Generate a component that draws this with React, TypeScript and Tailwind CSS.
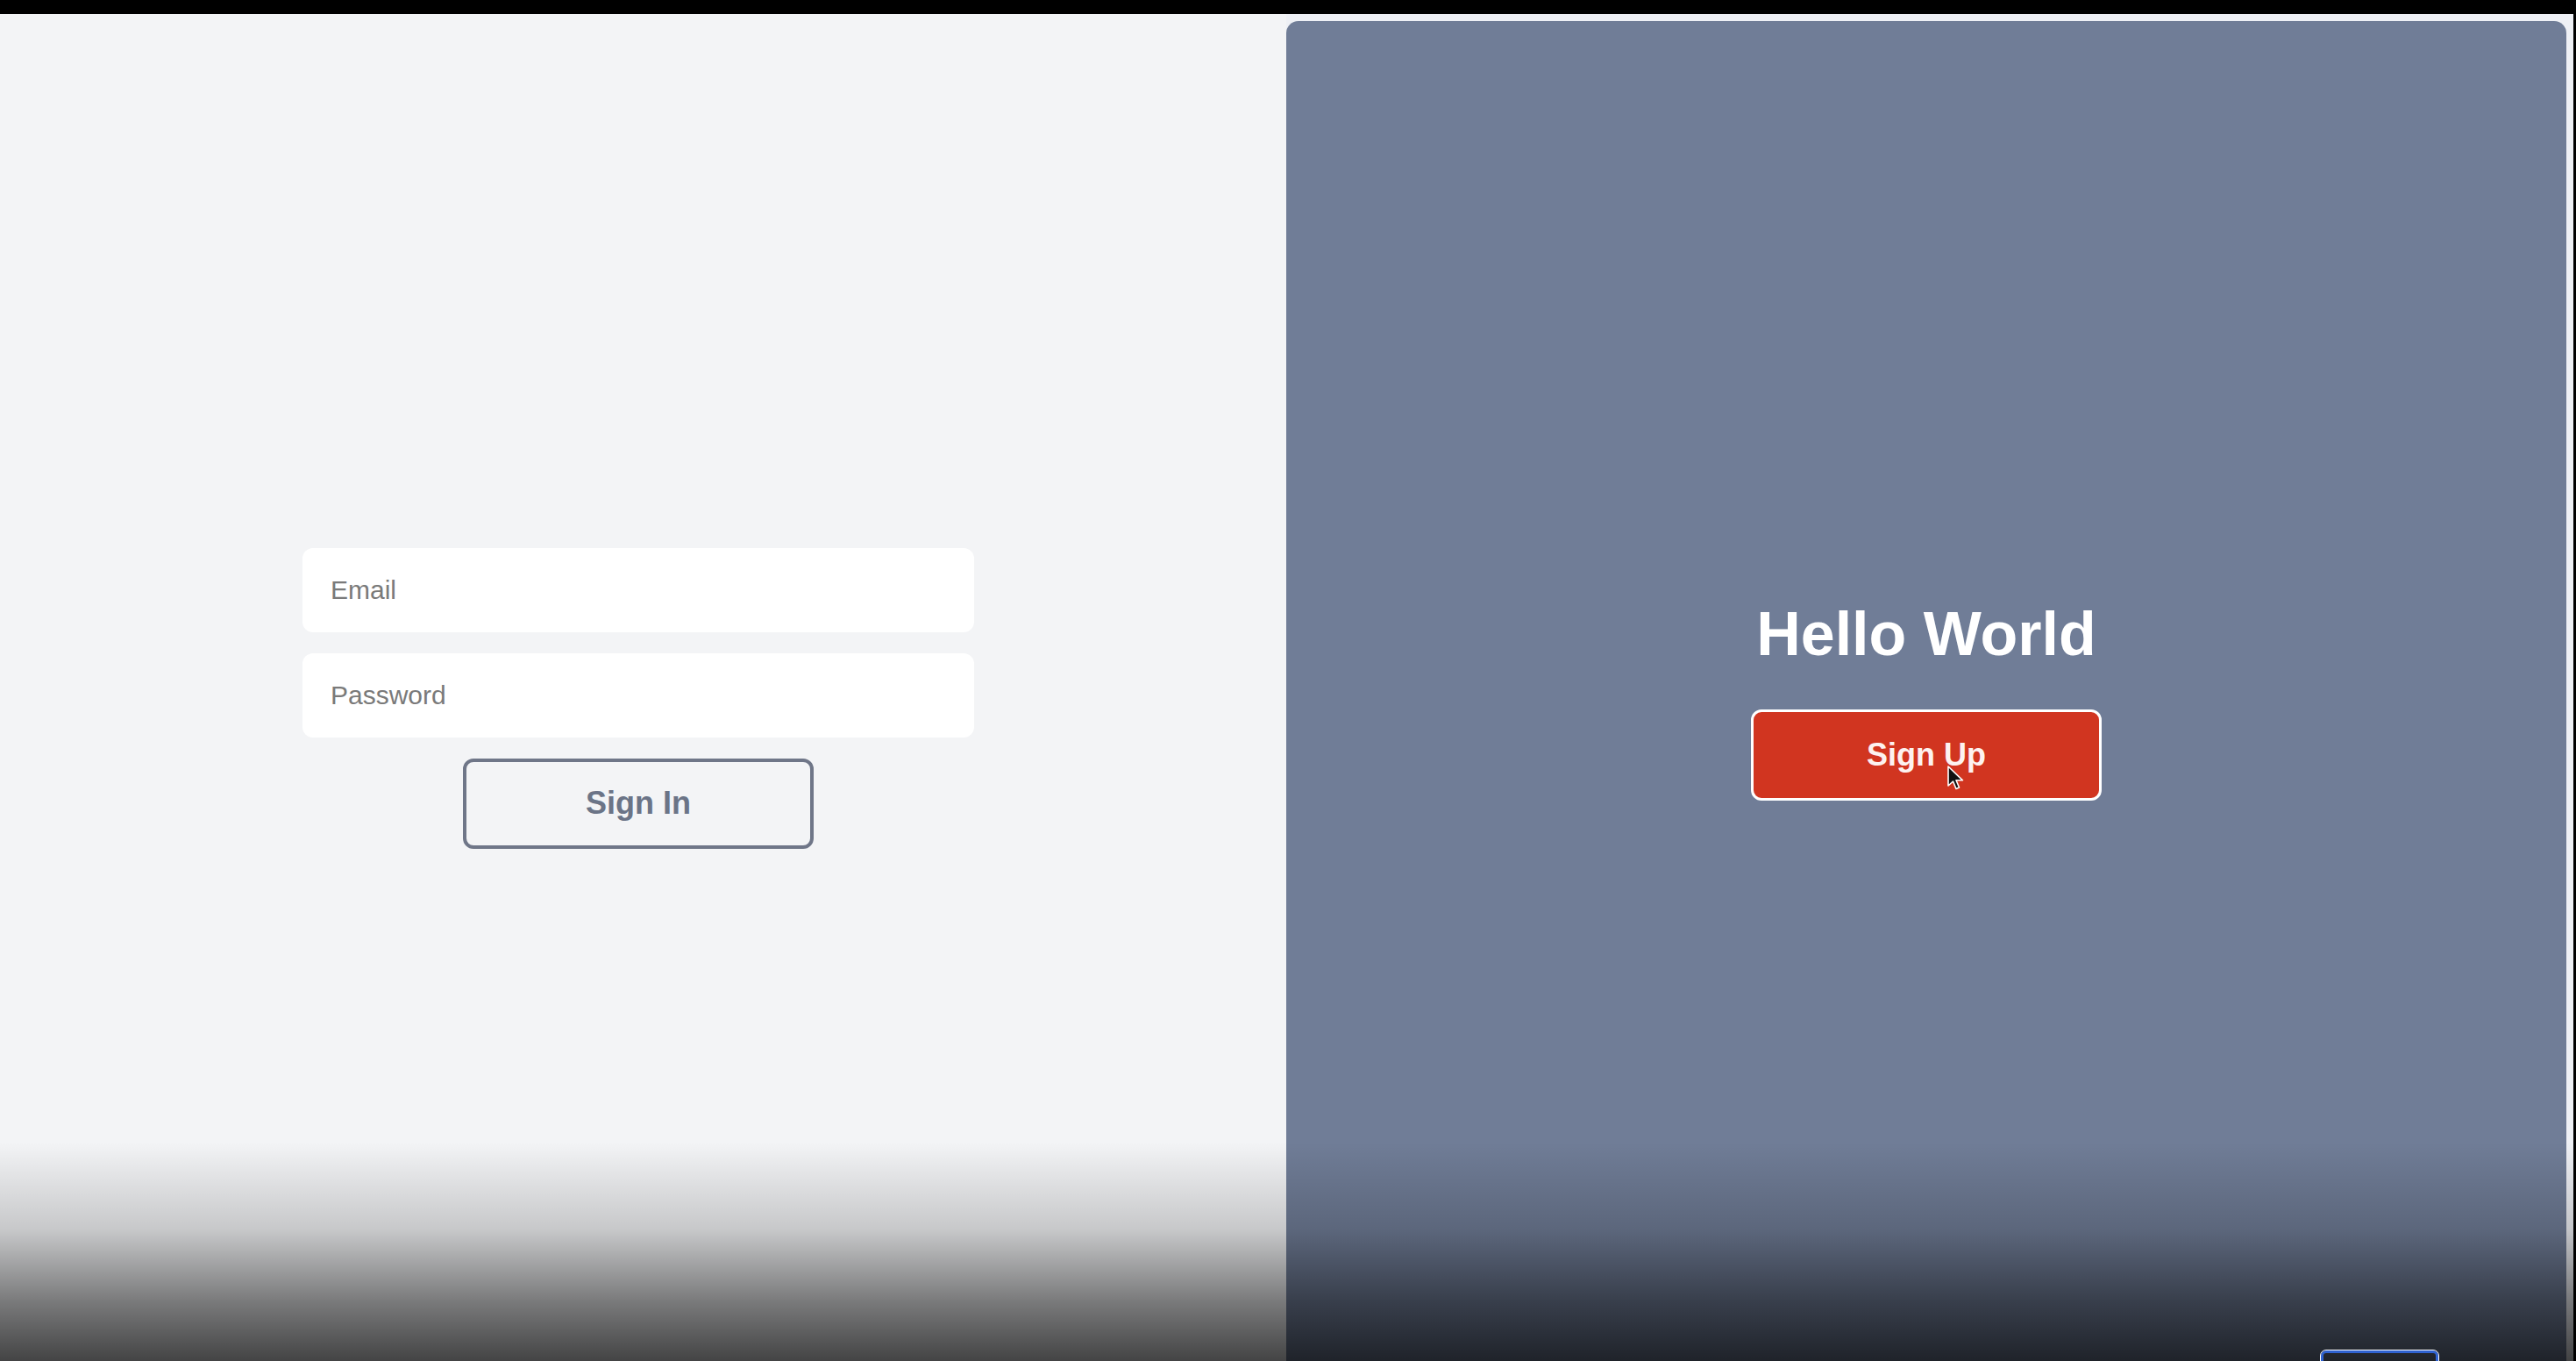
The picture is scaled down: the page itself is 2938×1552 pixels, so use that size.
import * as React from 'react';

const Cursor = () => (
    <svg width="22" height="30" viewBox="0 0 22 30" className="absolute left-[2220px] top-[872px]">
        <path d="M2 2 L2 24 L7.5 19 L11 27.5 L14.5 26 L11 17.8 L18.5 17.8 Z" fill="#111" stroke="#fff" strokeWidth="1.6" strokeLinejoin="round" />
    </svg>
);

const App = () => {
    return (
        <div className="relative w-[2938px] h-[1552px] overflow-hidden bg-black flex flex-col font-['Liberation_Sans',Arial,sans-serif]">
            {/* top bar */}
            <div className="h-4 shrink-0 bg-black" />

            <div className="flex flex-1 min-h-0 pr-[3px]">
                {/* left: sign in form */}
                <div className="w-[1467px] shrink-0 bg-[#f3f4f6] flex flex-col items-center justify-center pt-6 pr-[11px]">
                    <div className="w-[766px] flex flex-col items-center gap-6">
                        <input
                            type="email"
                            placeholder="Email"
                            className="w-full h-[96px] rounded-[12px] bg-white px-8 text-[30px] text-gray-700 placeholder:text-[#7a7a7a] outline-none"
                        />
                        <input
                            type="password"
                            placeholder="Password"
                            className="w-full h-[96px] rounded-[12px] bg-white px-8 text-[30px] text-gray-700 placeholder:text-[#7a7a7a] outline-none"
                        />
                        <button className="w-[400px] h-[103px] rounded-[12px] border-[4px] border-[#6f7688] text-[36px] font-bold text-[#6b7487]">
                            Sign In
                        </button>
                    </div>
                </div>

                {/* right: sign up panel */}
                <div className="flex-1 flex bg-[#eef0f5] pt-2 pr-2">
                    <div className="flex-1 rounded-t-[14px] bg-[#707d97] flex flex-col items-center justify-center pt-6 gap-[51px]">
                        <h1 className="text-[70px] leading-none font-bold text-white">Hello World</h1>
                        <button className="w-[400px] h-[104px] rounded-[12px] border-[3px] border-white bg-[#d13520] text-[36px] font-bold text-[#fdf2f0]">
                            Sign Up
                        </button>
                    </div>
                </div>
            </div>

            {/* video shade at the bottom */}
            <div className="pointer-events-none absolute left-0 right-0 bottom-0 h-[250px] bg-[linear-gradient(to_bottom,rgba(0,0,0,0)_0%,rgba(0,0,0,0.18)_40%,rgba(0,0,0,0.5)_73%,rgba(0,0,0,0.72)_100%)]" />

            {/* focus box peeking at the bottom */}
            <div className="absolute left-[2647px] top-[1540px] w-[134px] h-6 rounded-t-[6px] border-[3px] border-[#2f62d1] outline outline-1 outline-white" />

            <Cursor />
        </div>
    );
};

export default App;
